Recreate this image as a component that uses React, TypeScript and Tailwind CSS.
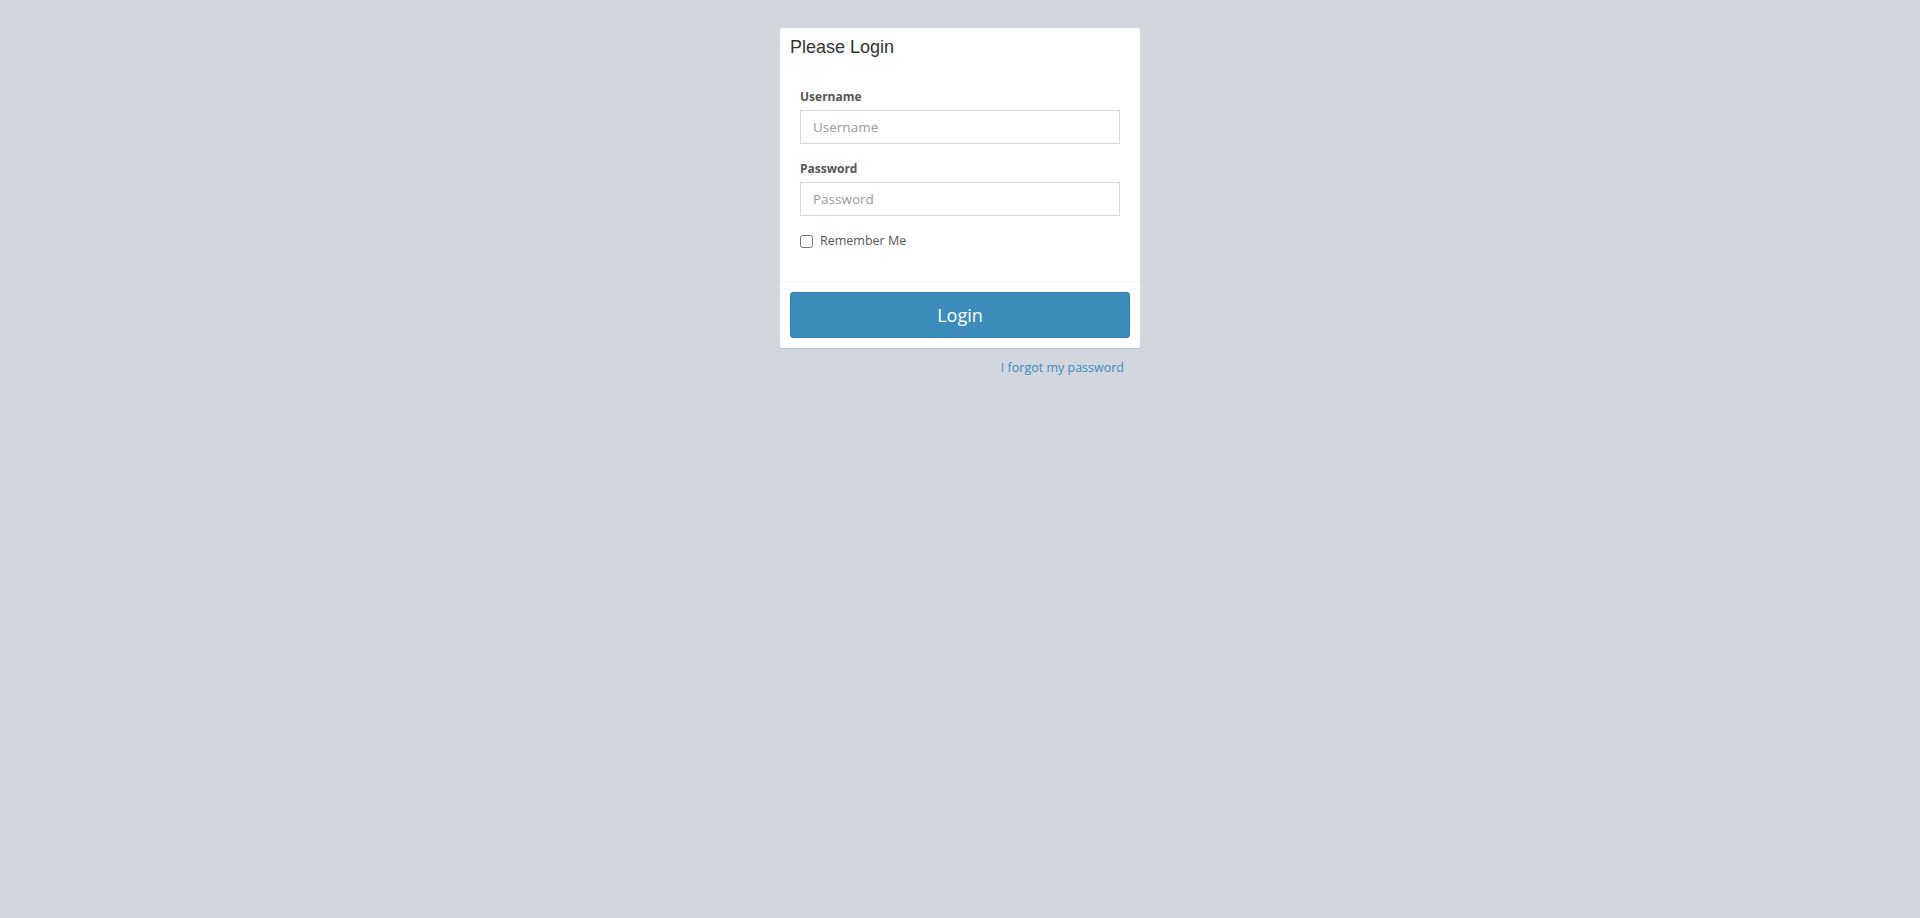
export default function App() {
  return (
    <div className="min-h-screen bg-[#d2d6de] flex justify-center pt-[28px] font-['Open_Sans',sans-serif]">
      <div className="w-[360px]">
        {/* Login box */}
        <div className="bg-white shadow-[0_1px_1px_rgba(0,0,0,0.1)] rounded-[2px]">
          <div className="px-[10px] pt-[9px] pb-[11px]">
            <h3 className="text-[18px] leading-[20px] text-[#333] font-['Liberation_Sans',Arial,sans-serif]">Please Login</h3>
          </div>
          <form className="px-[20px] pt-[20px] pb-[30px]">
            <div className="mb-[16px]">
              <label className="block text-[12px] leading-[17px] font-bold text-[#555] mb-[5px]">Username</label>
              <input
                type="text"
                placeholder="Username"
                className="w-full h-[34px] border border-[#d2d6de] px-[12px] text-[13.5px] text-[#555] placeholder:text-[#999] outline-none"
              />
            </div>
            <div className="mb-[10px]">
              <label className="block text-[12px] leading-[17px] font-bold text-[#555] mb-[5px]">Password</label>
              <input
                type="password"
                placeholder="Password"
                className="w-full h-[34px] border border-[#d2d6de] px-[12px] text-[13.5px] text-[#555] placeholder:text-[#999] outline-none"
              />
            </div>
            <label className="flex items-center gap-[7px] h-[20px] mt-[15px] text-[12.5px] text-[#555]">
              <input type="checkbox" className="w-[13px] h-[13px] m-0" />
              Remember Me
            </label>
          </form>
          <div className="border-t border-[#f4f4f4] p-[10px]">
            <button className="w-full h-[46px] rounded-[3px] bg-[#3c8dbc] border border-[#367fa9] text-white text-[18px]">
              Login
            </button>
          </div>
        </div>
        <div className="flex justify-end pr-[16px] pt-[11px]">
          <a href="#" className="text-[12.5px] text-[#3c8dbc]">I forgot my password</a>
        </div>
      </div>
    </div>
  );
}
